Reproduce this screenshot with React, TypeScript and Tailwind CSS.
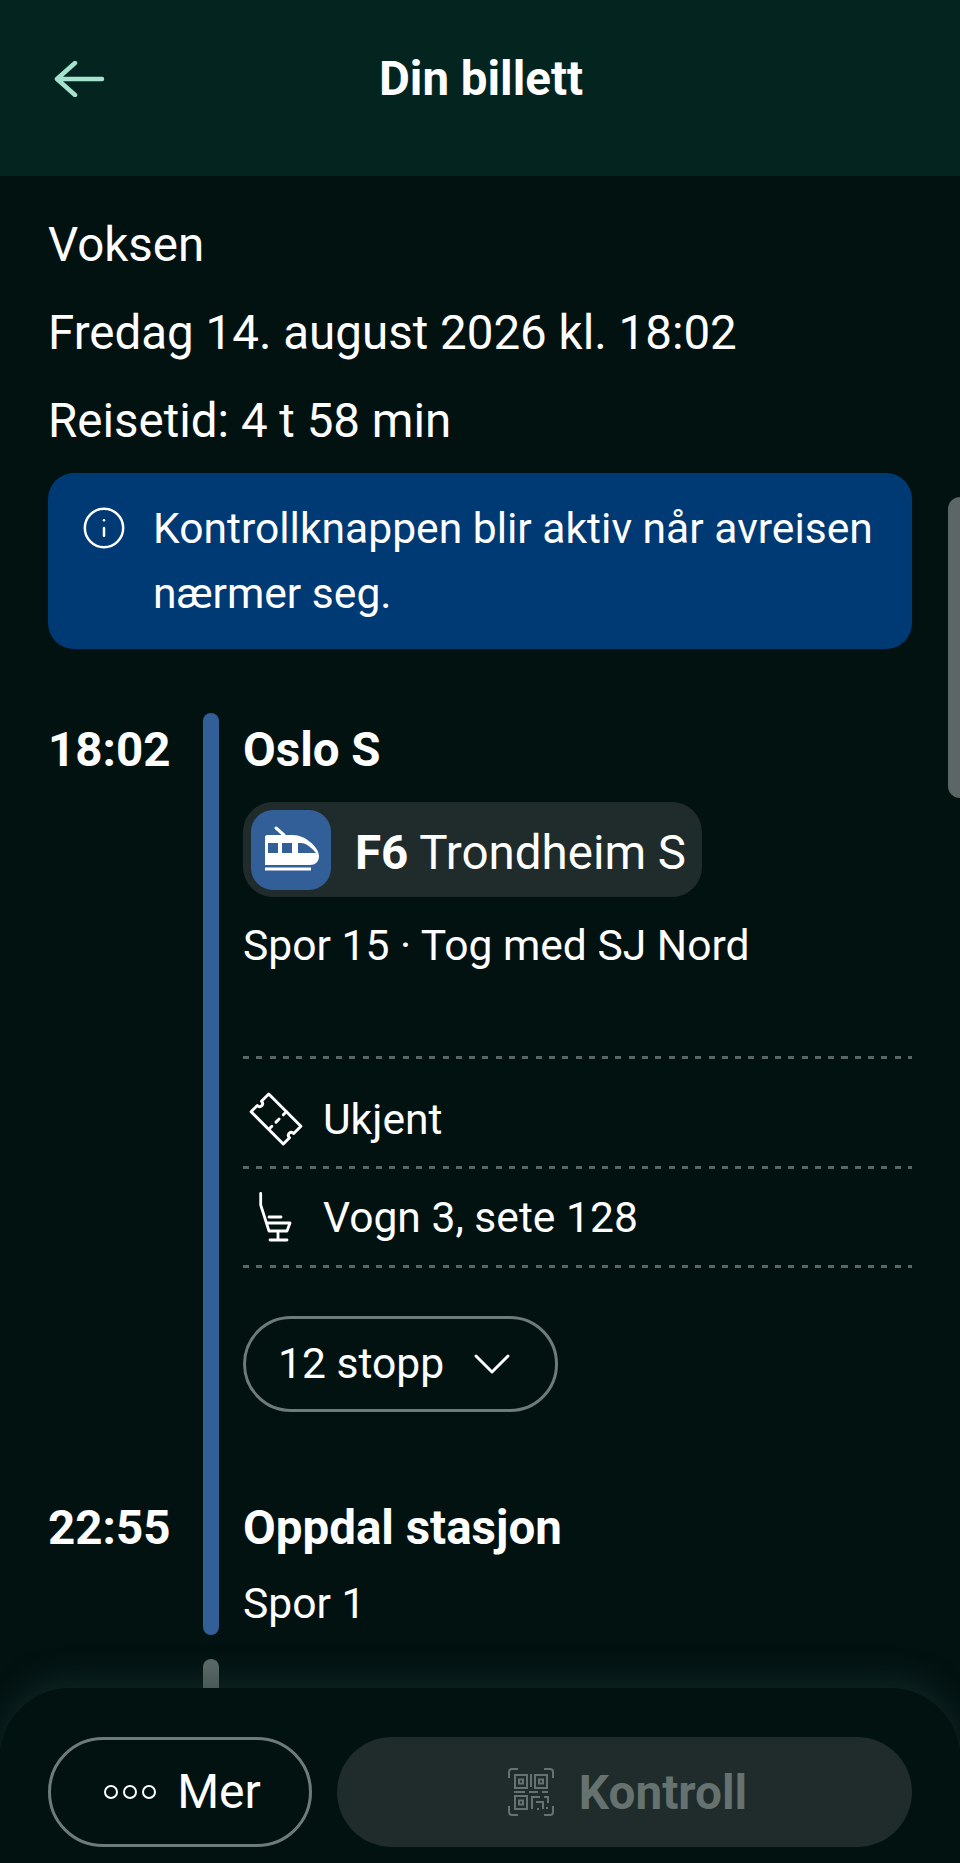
import type { ReactNode } from "react";
import { ChevronDown, Info } from "lucide-react";

const TrainIcon = () => (
  <svg viewBox="0 0 80 80" className="w-[80px] h-[80px]">
    <path d="M25 18 L33 25" stroke="white" strokeWidth="3" strokeLinecap="round" />
    <path
      fill="white"
      fillRule="evenodd"
      d="M16 25 H42 C54 25 68 37 68 46 C68 52 64 55 59 55 H14 V27 C14 26 15 25 16 25 Z M17 33 V43 H27 V33 Z M31 33 V43 H41 V33 Z M47 33 V43 H65 C61 38 55 33 50 33 Z"
    />
    <rect x="14" y="57.5" width="46" height="3" fill="white" />
  </svg>
);

const TicketIcon = () => (
  <svg viewBox="0 0 52 52" className="w-[54px] h-[54px]" fill="none" stroke="white" strokeWidth="2.8" strokeLinejoin="round" strokeLinecap="round">
    <path d="M19 2 L50 33 L43 40 C40 37 36 41 39 44 L33 50 L2 19 L8 13 C11 16 15 12 12 9 Z" />
    <path d="M36 19 L33 22 M29 26 L26 29 M22 33 L20 35" />
  </svg>
);

const SeatIcon = () => (
  <svg viewBox="28 20 36 54" className="w-[36px] h-[54px]" fill="none" stroke="white" strokeWidth="2.8" strokeLinecap="round" strokeLinejoin="round">
    <path d="M30.7 23.3 V35 L39 61 M39 47 H51 M37 53 H60 L57 61 H39 M48 61 V70 M40 70 H57" />
  </svg>
);

const QrIcon = () => (
  <svg viewBox="0 0 46 48" className="w-[46px] h-[48px]" fill="none" stroke="#66726f" strokeWidth="2">
    <path d="M1 10 V4 Q1 1 4 1 H10 M36 1 H42 Q45 1 45 4 V10 M1 38 V44 Q1 47 4 47 H10 M45 38 V44 Q45 47 42 47 H36" />
    <rect x="7" y="7" width="12" height="13" />
    <rect x="11" y="11.5" width="4" height="4" />
    <rect x="27" y="7" width="12" height="13" />
    <rect x="31" y="11.5" width="4" height="4" />
    <rect x="7" y="28" width="12" height="13" />
    <rect x="11" y="32.5" width="4" height="4" />
    <path d="M23 6 V19 M6 24 H17 M21 24 H30 M34 24 H40 M24 28 V41 M24 29 H32 M36 29 H40 V35 M28 34 H35 V41 M29 41 H31 M39 39 V41" />
  </svg>
);

const Divider = () => (
  <div className="h-[3px] bg-[repeating-linear-gradient(90deg,#5a6664_0_6px,transparent_6px_13.3px)]" />
);

const InfoRow = ({ icon, text, cls }: { icon: ReactNode; text: string; cls: string }) => (
  <div className={`flex items-center ${cls}`}>
    <div className="flex w-[80px] justify-center pr-[14px]">{icon}</div>
    <span className="text-[42.6px] leading-[60px] text-white">{text}</span>
  </div>
);

const Dot = () => <i className="h-[14px] w-[14px] rounded-full border-2 border-white" />;

export default function App() {
  return (
    <div className="relative h-[1863px] w-[960px] overflow-hidden bg-[#021211] font-['Roboto',sans-serif] text-white">
      {/* top bar */}
      <div className="relative flex h-[176px] items-center justify-center bg-[#03241f] pb-[18px]">
        <svg viewBox="0 0 52 36" className="absolute left-[54px] top-[61px] h-[36px] w-[52px]" fill="none" stroke="#a5e3cf" strokeWidth="4.5" strokeLinecap="round" strokeLinejoin="round">
          <path d="M48 18 H3 M21 2 L3 18 L21 34" />
        </svg>
        <h1 className="ml-[2px] text-[47.5px] font-bold leading-[60px]">Din billett</h1>
      </div>

      <div className="px-12 pt-[25px]">
        <div className="text-[47.5px] leading-[88px]">Voksen</div>
        <div className="text-[47.5px] leading-[88px]">Fredag 14. august 2026 kl. 18:02</div>
        <div className="text-[47.5px] leading-[88px]">Reisetid: 4 t 58 min</div>

        <div className="mt-[8px] flex h-[176px] rounded-[26px] bg-[#003a75] pl-[33px] pr-[30px] pt-[23px]">
          <Info className="mt-[9px] h-[46px] w-[46px] shrink-0" strokeWidth={1.3} />
          <p className="ml-[26px] text-[42.6px] leading-[65px]">
            Kontrollknappen blir aktiv når avreisen nærmer seg.
          </p>
        </div>

        {/* first leg */}
        <div className="mt-[64px] flex">
          <div className="w-[155px] text-[47.5px] font-bold leading-[74px]">
            <div>18:02</div>
            <div className="mt-[704px]">22:55</div>
          </div>
          <div className="h-[922px] w-[16px] rounded-full bg-[#335f99]" />
          <div className="ml-[24px] flex-1">
            <div className="text-[47.5px] font-bold leading-[74px]">Oslo S</div>
            <div className="mt-[15px] flex h-[95px] w-[459px] items-center rounded-[30px] bg-[#1f2c2b] pl-[8px]">
              <div className="h-[80px] w-[80px] rounded-[22px] bg-[#335f99]">
                <TrainIcon />
              </div>
              <span className="ml-[24px] mt-[6px] text-[47.5px] leading-[60px]">
                <b className="font-bold">F6</b> Trondheim S
              </span>
            </div>
            <div className="mt-[18px] text-[42.6px] leading-[60px]">Spor 15 · Tog med SJ Nord</div>
            <div className="mt-[81px]">
              <Divider />
            </div>
            <InfoRow icon={<TicketIcon />} text="Ukjent" cls="h-[107px] pt-[12px]" />
            <Divider />
            <InfoRow icon={<SeatIcon />} text="Vogn 3, sete 128" cls="h-[96px]" />
            <Divider />
            <button className="mt-[48px] flex h-[96px] w-[315px] items-center rounded-full border-[3px] border-[#6f7b79] pl-[32px] text-[42.6px]">
              12 stopp
              <ChevronDown className="ml-[16px] h-[64px] w-[64px]" strokeWidth={1.1} />
            </button>
            <div className="mt-[79px] text-[47.5px] font-bold leading-[74px]">Oppdal stasjon</div>
            <div className="mt-[8px] text-[42.6px] leading-[60px]">Spor 1</div>
          </div>
        </div>
      </div>

      {/* stub of the next leg, behind the bottom bar */}
      <div className="absolute left-[203px] top-[1659px] h-[60px] w-[16px] rounded-full bg-[#5f6b69]" />

      {/* scrollbar */}
      <div className="absolute right-0 top-[497px] h-[301px] w-[12px] rounded-l-full bg-[#5c6664]" />

      {/* bottom bar */}
      <div className="absolute bottom-0 left-0 flex h-[175px] w-full gap-[25px] rounded-t-[70px] bg-[#021211] px-12 pt-[49px] shadow-[0_-10px_30px_rgba(30,60,55,0.45)]">
        <button className="flex h-[110px] w-[264px] items-center justify-center rounded-full border-[3px] border-[#6f7b79] pl-[5px]">
          <span className="flex gap-[5px]">
            <Dot />
            <Dot />
            <Dot />
          </span>
          <span className="ml-[21px] text-[48px]">Mer</span>
        </button>
        <button className="flex h-[110px] flex-1 items-center justify-center rounded-full bg-[#1f2c2b] pl-[6px] text-[#66726f]">
          <QrIcon />
          <span className="ml-[25px] pt-[3px] text-[47.7px] font-bold">Kontroll</span>
        </button>
      </div>
    </div>
  );
}
